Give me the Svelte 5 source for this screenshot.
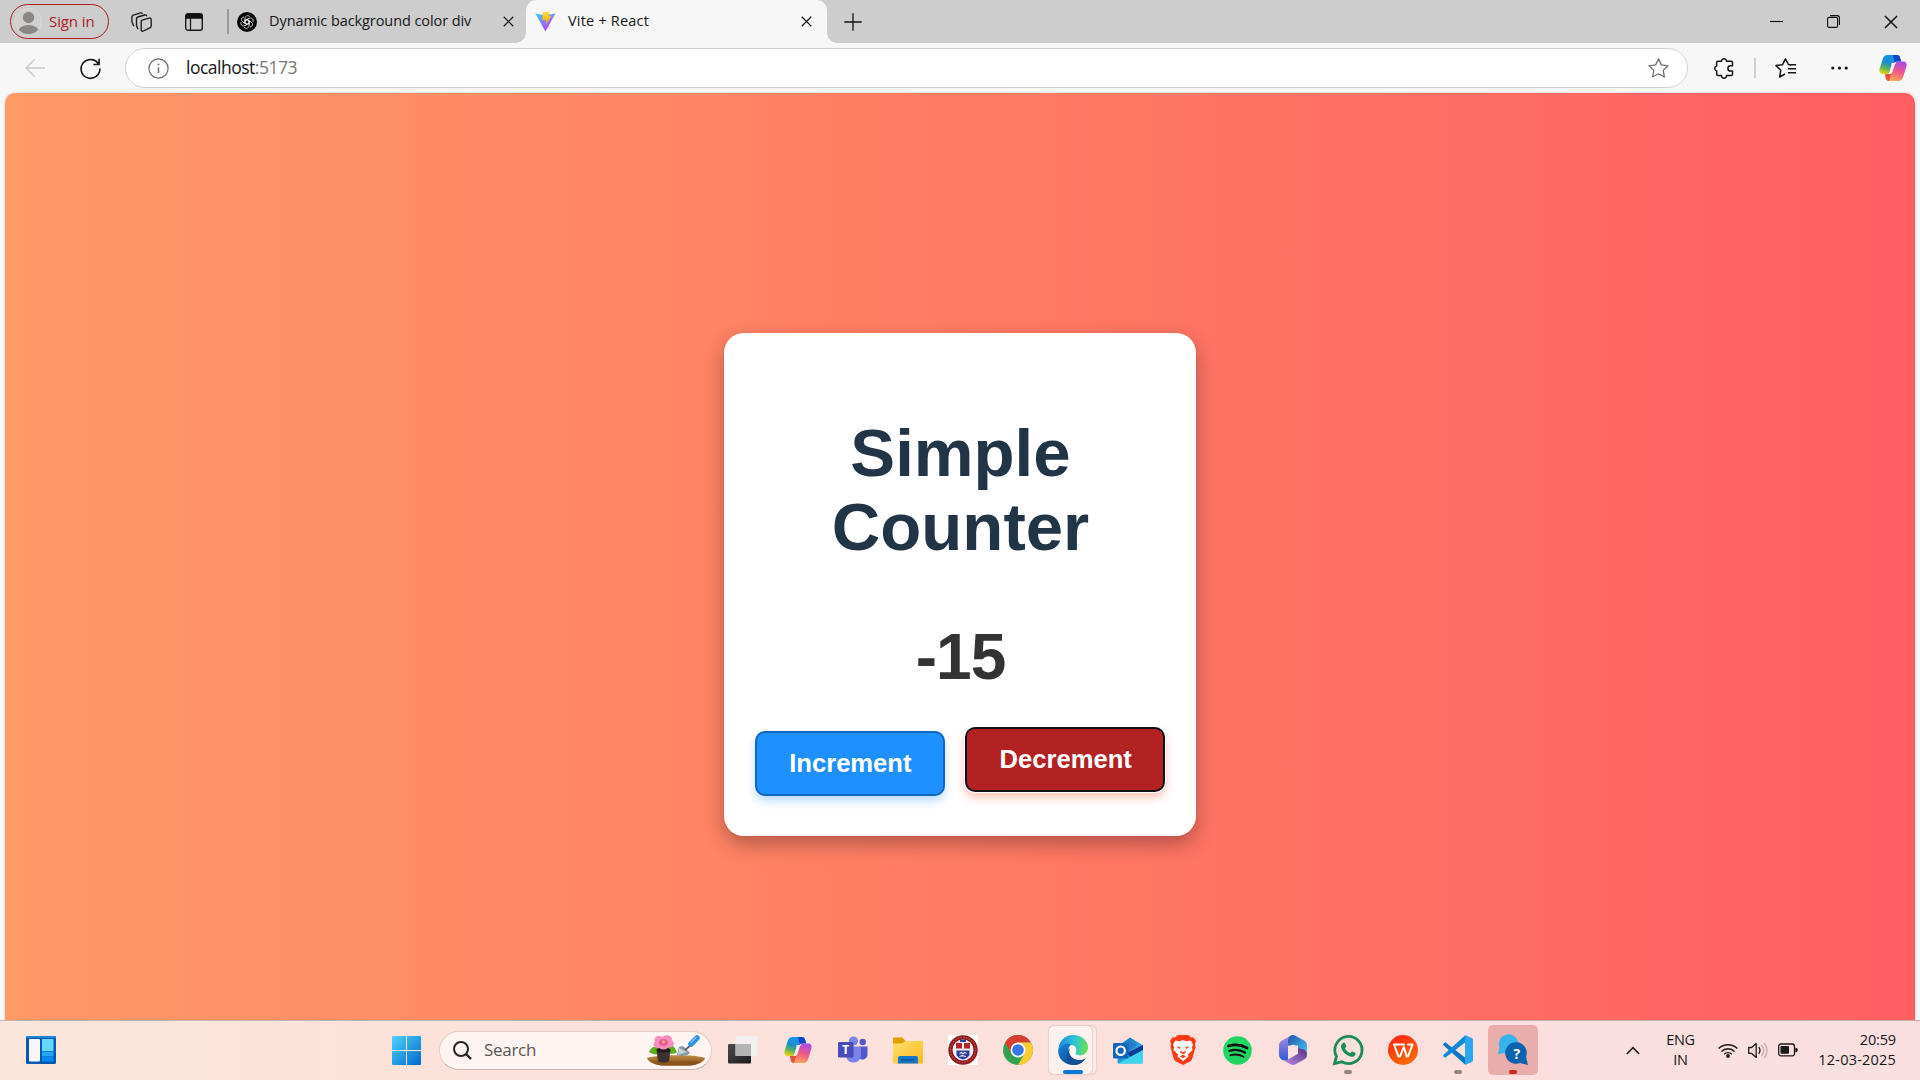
<script>
  let count = $state(-15);
</script>

{#snippet copilot()}
  <svg width="28" height="26" viewBox="0 0 28 26">
    <path d="M9 0h9c2 0 2.600 1.200 3.200 3l1 3.500h-4c-2 0-3 1-3.600 3l-2 6c-.8 2.500-2 3.500-4.500 3.500H3.500C.7 19 0 16.500.6 14L3.700 4C4.500 1.500 6 0 9 0z" fill="url(#cpA)" />
    <path d="M14 0h4c2 0 2.600 1.200 3.200 3l1 3.500h-4c-1.200 0-2 .4-2.600 1z" fill="#1146c8" />
    <path d="M19 26h-9c-2 0-2.600-1.200-3.200-3l-1-4h3.500c2.500 0 3.700-1 4.500-3.500l2-6c.6-2 1.600-3 3.600-3h5.100c2.800 0 3.500 2.500 2.900 5l-3.100 10C23.500 24.500 22 26 19 26z" fill="url(#cpB)" />
    <path d="M6 19h3.300c1.500 0 2.500-.4 3.200-1.200L10 26c-2 0-2.600-1.200-3.200-3z" fill="#e8503a" />
    <path d="M12.500 8h4.500c-.8.500-1.200 1.200-1.500 2l-2.300 7c-.5 1.300-1.200 2-2.500 2h-1l2.500-8z" fill="#fbeeee" />
  </svg>
{/snippet}

{#snippet cross(size)}
  <svg width={size} height={size} viewBox="0 0 12 12" fill="none" stroke="#111" stroke-width="1.300"><path d="M.8.8l10.400 10.400M11.200.8L.8 11.200" /></svg>
{/snippet}

<svg class="defs" width="0" height="0" aria-hidden="true">
  <defs>
    <linearGradient id="cpA" x1="0.600" y1="0" x2="0.200" y2="1"><stop offset="0" stop-color="#1295f0" /><stop offset=".45" stop-color="#1c8fc8" /><stop offset=".7" stop-color="#55b35c" /><stop offset="1" stop-color="#f2d411" /></linearGradient>
    <linearGradient id="cpB" x1="0.800" y1="0" x2="0.400" y2="1"><stop offset="0" stop-color="#a44cf0" /><stop offset=".5" stop-color="#f0568a" /><stop offset="1" stop-color="#fdaa55" /></linearGradient>
    <linearGradient id="viteA" x1="0" y1="0" x2=".6" y2="1"><stop offset="0" stop-color="#41d1ff" /><stop offset="1" stop-color="#bd34fe" /></linearGradient>
    <linearGradient id="viteB" x1="0" y1="0" x2="0" y2="1"><stop offset="0" stop-color="#ffdd35" /><stop offset="1" stop-color="#ffa800" /></linearGradient>
    <linearGradient id="win" x1="0" y1="0" x2="1" y2="1"><stop offset="0" stop-color="#4fd3ff" /><stop offset="1" stop-color="#0069cc" /></linearGradient>
    <linearGradient id="edgeA" x1="0" y1=".3" x2="1" y2=".4"><stop offset="0" stop-color="#1b8fdc" /><stop offset=".55" stop-color="#2fc2d6" /><stop offset="1" stop-color="#67e052" /></linearGradient>
    <linearGradient id="edgeB" x1="0" y1="0" x2=".7" y2="1"><stop offset="0" stop-color="#1688dc" /><stop offset="1" stop-color="#10458c" /></linearGradient>
    <linearGradient id="folder" x1="0" y1="0" x2="1" y2="1"><stop offset="0" stop-color="#ffdf6b" /><stop offset="1" stop-color="#fbb91f" /></linearGradient>
    <linearGradient id="m365" x1="0" y1="0" x2="0" y2="1"><stop offset="0" stop-color="#b18ae0" /><stop offset="1" stop-color="#2b5cd6" /></linearGradient>
    <linearGradient id="m365b" x1="0" y1="0" x2="1" y2="1"><stop offset="0" stop-color="#2350a8" /><stop offset="1" stop-color="#48c8f4" /></linearGradient>
    <linearGradient id="m365c" x1="0" y1="1" x2="1" y2="0"><stop offset="0" stop-color="#bb8be6" /><stop offset="1" stop-color="#54327e" /></linearGradient>
    <linearGradient id="wps" x1="0" y1="0" x2=".6" y2="1"><stop offset="0" stop-color="#ff1f17" /><stop offset="1" stop-color="#ff6a00" /></linearGradient>
    <linearGradient id="dark" x1="0" y1="0" x2="1" y2="1"><stop offset="0" stop-color="#4a4a4a" /><stop offset="1" stop-color="#1c1c1c" /></linearGradient>
    <linearGradient id="soil" x1="0" y1="0" x2="0" y2="1"><stop offset="0" stop-color="#c08a48" /><stop offset="1" stop-color="#7c4a14" /></linearGradient>
    <linearGradient id="out" x1="0" y1="0" x2="1" y2="1"><stop offset="0" stop-color="#1565c0" /><stop offset="1" stop-color="#35cdf2" /></linearGradient>
  </defs>
</svg>

<div class="screen">
  <header class="titlebar">
    <div class="signin">
      <svg width="27" height="27" viewBox="0 0 27 27"><defs><clipPath id="av"><circle cx="13.500" cy="13.500" r="12.800" /></clipPath></defs><circle cx="13.500" cy="13.500" r="13" fill="#d2d0ce" stroke="#dedcda" /><g fill="#8a8886" clip-path="url(#av)"><circle cx="13.500" cy="9.500" r="5.700" /><ellipse cx="13.500" cy="23.500" rx="10.500" ry="6.500" /></g></svg>
      <span>Sign in</span>
    </div>
    <div class="slot workspaces">
      <svg width="21" height="20" viewBox="0 0 21 20" fill="none" stroke="#1b1b1b" stroke-width="1.350" stroke-linejoin="round" stroke-linecap="round"><path d="M11 8.200l7.300-2.100c1-.3 1.900.2 1.900 1.300v6.300c0 1-.5 1.700-1.400 2.100l-6.400 3.200c-1.200.6-2.200 0-2.200-1.200v-8c0-.8.200-1.400.8-1.600z" /><path d="M6.900 16.800l-1-2.200c-.3-.6-.4-1-.4-1.600V6.800c0-.9.500-1.500 1.300-1.800l6.900-2c.9-.2 1.500 0 1.900.8" /><path d="M2.600 13.700l-1.300-2.900c-.3-.6-.4-1-.4-1.700V5c0-1 .5-1.600 1.400-1.900L9.500.9c.8-.2 1.400 0 1.700.6" /></svg>
    </div>
    <div class="slot vtabs">
      <svg width="18" height="18" viewBox="0 0 18 18"><rect x=".7" y=".7" width="16.600" height="16.600" rx="2.300" fill="none" stroke="#1b1b1b" stroke-width="1.400" /><path d="M.5 5.700V3C.5 1.500 1.500.4 3 .4h12c1.500 0 2.500 1.100 2.500 2.600v2.700z" fill="#111" /><path d="M5.500 5v12" stroke="#1b1b1b" stroke-width="1.300" /></svg>
    </div>
    <div class="split"></div>
    <div class="tab idle">
      <svg width="20" height="20" viewBox="0 0 20 20"><circle cx="10" cy="10" r="10" fill="#080808" /><g fill="none" stroke="#eee" stroke-width=".75">{#each [0, 60, 120, 180, 240, 300] as a}<path transform="rotate({a} 10 10)" d="M8 11.200V6.300c0-2.600 3.500-3.500 4.800-1.400M8 8.800l2.100-1.200 3.800 2.200" />{/each}</g></svg>
      <span class="label long">Dynamic background color div</span>
      <i class="close">{@render cross(11)}</i>
    </div>
    <div class="tab active">
      <svg width="21" height="21" viewBox="0 0 21 21"><path d="M.3 2.600l9.600 1.700 10.600-1.700L10.400 20.500z" fill="url(#viteA)" /><path d="M7.800 1.600L14.800.4l-1.300 4.700 3-.3-5.900 9.200.6-5.200-3.700.4z" fill="url(#viteB)" /></svg>
      <span class="label short">Vite + React</span>
      <i class="close">{@render cross(11)}</i>
    </div>
    <div class="slot add"><svg width="18" height="18" viewBox="0 0 18 18" stroke="#111" stroke-width="1.300"><path d="M9 .3v17.400M.3 9h17.400" /></svg></div>
    <div class="controls">
      <div class="slot"><svg width="13" height="13" viewBox="0 0 13 13"><path d="M0 6.500h13" stroke="#111" stroke-width="1.100" /></svg></div>
      <div class="slot"><svg width="13" height="13" viewBox="0 0 13 13" fill="none" stroke="#111" stroke-width="1.100"><rect x=".6" y="2.400" width="10" height="10" rx="1.500" /><path d="M3 .6h7.200c1.400 0 2.200.8 2.200 2.200V10" /></svg></div>
      <div class="slot last">{@render cross(14)}</div>
    </div>
  </header>

  <nav class="toolbar">
    <div class="slot back"><svg width="20" height="18" viewBox="0 0 20 18" fill="none" stroke="#c9c9c9" stroke-width="1.400"><path d="M20 9H1M9.500.5L1 9l8.500 8.500" /></svg></div>
    <div class="slot reload"><svg width="21" height="21" viewBox="0 0 21 21" fill="none" stroke="#161616" stroke-width="1.600"><path d="M18.800 6.500A9.400 9.400 0 1 0 19.900 10.500M19.100.8v5.700h-5.700" /></svg></div>
    <div class="address">
      <svg width="21" height="21" viewBox="0 0 21 21"><circle cx="10.500" cy="10.500" r="9.600" fill="none" stroke="#6d6d6d" stroke-width="1.200" /><path d="M10.500 9.300v5.700" stroke="#6d6d6d" stroke-width="1.500" /><circle cx="10.500" cy="6.600" r="1" fill="#6d6d6d" /></svg>
      <span class="url">localhost<em>:5173</em></span>
      <svg class="star" width="21" height="20" viewBox="0 0 21 20" fill="none" stroke="#707070" stroke-width="1.300" stroke-linejoin="round"><path d="M10.500.9l2.900 6 6.600.9-4.800 4.600 1.200 6.600-5.900-3.200L4.600 19l1.200-6.600L1 7.800l6.600-.9z" /></svg>
    </div>
    <div class="slot puzzle"><svg width="20" height="21" viewBox="0 0 20 21" fill="none" stroke="#161616" stroke-width="1.500" stroke-linejoin="round"><path d="M4 3.200h3.500C7.400 1.700 8.500.8 10 .8s2.600.9 2.500 2.400h4.700c.8 0 1.300.5 1.300 1.300v3.300h-2c-1.600 0-2.600 1.200-2.600 2.600s1 2.600 2.600 2.600h2v3.300c0 .8-.5 1.300-1.300 1.300h-4.700c.1 1.600-1 2.600-2.500 2.600s-2.600-1-2.500-2.600H4c-.8 0-1.300-.5-1.300-1.300V13C1.500 12.500.8 11.600.8 10.400S1.500 8.300 2.700 7.800V4.500c0-.8.500-1.300 1.300-1.300z" /></svg></div>
    <div class="rule"></div>
    <div class="slot favs"><svg width="21" height="20" viewBox="0 0 21 20" fill="none" stroke="#161616" stroke-width="1.500" stroke-linejoin="round"><path d="M16 6.900l-2.600-.4L10.500.9 7.600 6.700 1 7.600l4.800 4.600L4.600 19l5.400-3" /><path d="M15 6.800h6M13 10.800h8M13 14.800h8" /></svg></div>
    <div class="slot dots"><svg width="17" height="4" viewBox="0 0 17 4" fill="#111"><circle cx="1.800" cy="2" r="1.600" /><circle cx="8.500" cy="2" r="1.600" /><circle cx="15.200" cy="2" r="1.600" /></svg></div>
    <div class="slot cop">{@render copilot()}</div>
  </nav>

  <main class="viewport">
    <div class="page">
      <section class="card">
        <h1>Simple Counter</h1>
        <p class="count">{count}</p>
        <div class="buttons">
          <button class="inc" onclick={() => count++}>Increment</button>
          <button class="dec" onclick={() => count--}>Decrement</button>
        </div>
      </section>
    </div>
  </main>

  <footer class="taskbar">
    <div class="widgets"><svg width="30" height="28" viewBox="0 0 30 28"><rect width="30" height="28" rx="1.500" fill="#0759ad" /><path d="M0 1h30" stroke="#1e84d8" stroke-width="2" /><rect x="3" y="3" width="11" height="22.500" rx="1" fill="#f6f6f6" /><rect x="16" y="3" width="11.500" height="12" fill="#62d6ff" /><rect x="16" y="15.500" width="11.500" height="5" fill="#22a4fa" /><rect x="16" y="21" width="11.500" height="4.500" fill="#078af0" /></svg></div>
    <div class="start"><svg width="29" height="29" viewBox="0 0 29 29" fill="url(#win)"><path d="M1 0h13v14H0V1a1 1 0 0 1 1-1zM15 0h13a1 1 0 0 1 1 1v13H15zM0 15h14v14H1a1 1 0 0 1-1-1zM15 15h14v13a1 1 0 0 1-1 1H15z" /></svg></div>
    <div class="search">
      <svg width="19" height="19" viewBox="0 0 19 19" fill="none" stroke="#222" stroke-width="2"><circle cx="8" cy="8" r="7" /><path d="M13 13l5 5" stroke-width="2.400" /></svg>
      <span>Search</span>
      <svg class="art" width="60" height="31" viewBox="0 0 60 31">
        <path d="M1 23c10-3 46-4 58 0-1 4-7 7-16 7.500H18C8 30 2 27 1 23z" fill="url(#soil)" /><path d="M5 25.500c15 2 32 0 50 1-4 2.500-8 4-12 4H18c-6 0-10-2-13-5z" fill="#8a5518" />
        <path d="M3 17c2-5 6-7 13-4l3 5c-7 2-12 2-16-1zM20 17c1-4 4-7 7-6 3 3 3.500 5 3.500 7-4 1-8 1-10.500-1z" fill="#5caf21" />
        <path d="M10.500 15h14l-1.500 11c-3 2-8 2-11 0z" fill="#3a3030" /><ellipse cx="17.500" cy="15" rx="7" ry="2.500" fill="#211b1b" />
        <g fill="#f78dbd"><ellipse cx="13" cy="4.500" rx="4.500" ry="3.500" /><ellipse cx="21" cy="3.800" rx="5" ry="3.600" /><ellipse cx="12" cy="9.500" rx="4.500" ry="3.500" /><ellipse cx="23" cy="8.500" rx="5" ry="4" /><ellipse cx="17.500" cy="11.500" rx="5" ry="3" /></g><ellipse cx="17.500" cy="7.500" rx="4.500" ry="3.500" fill="#ea5d94" /><circle cx="17.500" cy="7" r="1.400" fill="#ffb067" />
        <path d="M31 20l2-8 4-1 7 7c-3 3-8 4-13 2z" fill="#8997a1" /><path d="M33 13l8 4-9 3z" fill="#c5d0d8" /><path d="M39 15l6-5" stroke="#59636b" stroke-width="1.800" /><path d="M45 9l6-6" stroke="#2b95e2" stroke-width="5.500" stroke-linecap="round" /><path d="M45 7.500l5-5" stroke="#7cc5f7" stroke-width="1.500" stroke-linecap="round" />
      </svg>
    </div>

    <div class="apps">
      <div class="app"><svg width="30" height="30" viewBox="0 0 30 30"><rect x="0" y="9" width="23" height="19.500" rx="1" fill="url(#dark)" /><rect x="7.500" y="1" width="22" height="20" rx="1" fill="#f1f1f1" opacity=".85" /><path d="M7.500 9H23v12H7.500z" fill="#b3b3b3" /></svg></div>
      <div class="app">{@render copilot()}</div>
      <div class="app"><svg width="30" height="28" viewBox="0 0 30 28"><circle cx="15.500" cy="5" r="4.600" fill="#7b83eb" /><circle cx="24.700" cy="6" r="3.200" fill="#5059c9" /><path d="M21 10.500h8.500V18a5 5 0 0 1-8.500 4z" fill="#5059c9" /><path d="M8 10.500h15V19c0 10-15 10-15 0z" fill="#7b83eb" /><rect y="6" width="15.500" height="15.500" rx="1.300" fill="#464db8" /><text x="7.700" y="18.200" text-anchor="middle" fill="#fff" class="glyph" font-size="12.500">T</text></svg></div>
      <div class="app"><svg width="30" height="27" viewBox="0 0 30 27"><path d="M0 1.500Q0 .5 1 .5h8.500l3 3.500H29q1 0 1 1V8H0z" fill="#dfa000" /><path d="M0 6.500h9L12.500 4H29q1 0 1 1v20.500q0 1-1 1H1q-1 0-1-1z" fill="url(#folder)" /><path d="M5 26.500V21q0-2 2-2h16q2 0 2 2v5.500z" fill="#1677c8" /><path d="M8.500 23h13" stroke="#0b5390" stroke-width="1.500" /></svg></div>
      <div class="app"><svg width="30" height="30" viewBox="0 0 30 30"><rect width="30" height="30" fill="#fff" /><circle cx="15" cy="15" r="14.700" fill="#8e1719" /><circle cx="15" cy="15" r="12.500" fill="none" stroke="#b75458" stroke-width="1.500" stroke-dasharray="1.300 1.500" /><circle cx="15" cy="15" r="10.500" fill="#f3eef2" /><path d="M8 8h6v5.500H8zM16 8h6v5.500h-6z" fill="#b0252a" /><path d="M12 4.700h6V7h-6z" fill="#2c3c9b" /><path d="M8.500 15.500h13V20q-2 3.500-6.500 4.500Q10.500 23.500 8.500 20z" fill="#2c3c9b" /><path d="M11.500 18.500l2-1 1.500 1.500 1.500-1.500 2 1M11.500 21.500l2.500-.8 4 .8" stroke="#e8e6f5" stroke-width="1.200" fill="none" /></svg></div>
      <div class="app"><svg width="30" height="30" viewBox="0 0 30 30"><circle cx="15" cy="15" r="15" fill="#33a151" /><path d="M2 7.500a15 15 0 0 1 26 0H15L8.500 18.700z" fill="#db3c30" /><path d="M28 7.500A15 15 0 0 1 15 30l6.500-11.200L15 7.500z" fill="#fccc31" /><circle cx="15" cy="15" r="7.500" fill="#fff" /><circle cx="15" cy="15" r="5.800" fill="#3478e8" /></svg></div>
      <div class="app edge"><div class="behind"></div><div class="front"></div><svg width="30" height="30" viewBox="0 0 30 30"><path d="M.5 14C1 6 7 0 15.200 0 24 0 30 6 30 12.500c0 5-4 8-8.500 8-3 0-4.800-1.200-4.300-2.500 2-2 1.800-6.500-3-8C8.500 8.500 3 10 .5 14z" fill="url(#edgeA)" /><path d="M.2 14.500C3 9 9 7 13.500 9.500 9 12 9.500 19 14 22.500c4 3.500 9 3.300 12.500 1.500C22 30.500 16 30 14 30 6 29.500-.6 23 .2 14.500z" fill="url(#edgeB)" /><path d="M12.200 13c-2.800 5 .3 10.500 6.800 12 3.500.8 6.500-.5 8.500-1.500-3 5.500-8 6.500-12.500 6.500-6-2-9-12-2.800-17z" fill="#124f98" /><path d="M12 14.500c1-3 4.500-3.500 5.800-.8.900 2-.6 3.300-.6 4.300.3 1.500 2.300 2.500 5 2.300-4 2.500-10 .8-10.200-5.800z" fill="#fff" /></svg><b class="run wide"></b></div>
      <div class="app"><svg width="30" height="27" viewBox="0 0 30 27"><path d="M5 9L17 .5 29.500 8v17q0 1.500-1.500 1.500H6q-1.500 0-1.500-1.500z" fill="url(#out)" /><path d="M8 9l9-5 7 4-9 7z" fill="#2878cc" /><path d="M14 16L30 8v5L18 21z" fill="#0a3d99" /><path d="M5 26.500L30 13v12q0 1.500-1.500 1.500z" fill="#3ed3ef" /><rect y="6" width="15.500" height="15.500" rx="1.300" fill="#1066b8" /><circle cx="7.700" cy="13.700" r="4.200" fill="none" stroke="#fff" stroke-width="2.200" /></svg></div>
      <div class="app"><svg width="26" height="30" viewBox="0 0 26 30"><path d="M8 0h10l3 2.500 2.500-.3L26 6l-1 3 .5 3-3 11c-.4 1.500-1 2.300-2.200 3.200L13 30l-7.300-3.800C4.500 25.300 3.900 24.500 3.500 23L.5 12 1 9 0 6l2.500-3.800 2.500.3z" fill="#fb3b14" /><path d="M5.500 5.500l4 .7L13 5l3.500 1.200 4-.7 2.500 4-1 2.500.5 3-4.500 4.500.5 2L13 26l-5.500-4.500.5-2L3.500 15l.5-3-1-2.500z" fill="#fff" /><path d="M6.500 11.300l4 .8-.7 3.900 3.200 1 3.200-1-.7-3.900 4-.8-2.500 2.500-1-.3v4L13 19.300l-3-1.800v-4l-1 .3zM9.800 21.200l3.200-1.500 3.200 1.500-3.200 2z" fill="#fb4317" /></svg></div>
      <div class="app"><svg width="29" height="29" viewBox="0 0 29 29"><circle cx="14.500" cy="14.500" r="14.300" fill="#1ed760" /><g fill="none" stroke="#111" stroke-linecap="round"><path d="M5.500 10c6-1.700 13-1.200 18.500 2" stroke-width="2.800" /><path d="M6.500 14.800c5-1.500 11-1 15.500 1.800" stroke-width="2.300" /><path d="M7.500 19.200c4.500-1.200 9-.7 13 1.600" stroke-width="1.900" /></g></svg></div>
      <div class="app"><svg width="28" height="30" viewBox="0 0 28 30"><path d="M12 .5L3 5.500C1 6.800 0 8.300 0 10.500v9c0 3 1.500 4.500 3.500 5.500s4 .3 5.500-.6V10.500L17 6z" fill="url(#m365)" /><path d="M12 .5c1.500-.8 3-.6 4.500.2L25 5.500c2 1.200 3 3 3 5v9l-9-5v-4L9 10.500V6c0-2.500 1-4.500 3-5.500z" fill="url(#m365b)" /><path d="M28 19.500c0 2.500-1 4-3 5l-8.500 4.800c-1.700 1-3.500 1-5 0L3.500 25c2 1 4 .3 5.500-.6l10-5.700V13l6 1.500c2 1 3 3 3 5z" fill="url(#m365c)" /><path d="M14 9.500l5 2.800v5.500l-5 2.800-5-2.800v-5.500z" fill="#fde1de" /></svg></div>
      <div class="app"><svg width="30" height="30" viewBox="0 0 30 30"><path d="M1.500 28.500l2-7A13.600 13.600 0 1 1 8.700 26.800z" fill="none" stroke="#1c8c56" stroke-width="2.800" /><path d="M10 8c.8-.7 1.700-.6 2.100.3l1.100 2.600c.3 1-.9 1.800-1.200 2.500 1.200 2.200 2.800 3.700 5 4.700.9-.4 1.600-1.900 2.500-1.500l2.500 1.200c1 .5.7 1.500.2 2.200-1 1.600-3.200 2.300-5.200 1.600C12.700 20 9.500 17 8.200 12.800 7.600 10.700 8.600 9 10 8z" fill="#1c8c56" /></svg><b class="run"></b></div>
      <div class="app"><svg width="30" height="30" viewBox="0 0 30 30"><circle cx="15" cy="15" r="15" fill="url(#wps)" /><path d="M16 9.500H6L10.500 21.500H12L15.800 12l3 9.500h1.200L24.500 9.500H20" fill="none" stroke="#fff" stroke-width="2" stroke-linejoin="round" stroke-linecap="round" /></svg></div>
      <div class="app"><svg width="30" height="30" viewBox="0 0 30 30"><path d="M2.200 7.300L22 22.500v7L.8 10.500c-.8-.8-.8-1.500 0-2.300z" fill="#0b76c4" /><path d="M2.200 22.700L22 7.500v-7L.8 19.500c-.8.8-.8 1.500 0 2.300z" fill="#0b88d8" /><path d="M22 0l6.800 3c.8.400 1.200 1 1.200 2v20c0 1-.4 1.600-1.200 2L22 30z" fill="#28a7f2" /></svg><b class="run"></b></div>
      <div class="app help"><svg width="30" height="30" viewBox="0 0 30 30"><path d="M0 19.500L1.500 13a9.800 9.800 0 1 1 9 6L5 18z" fill="#35b5ea" /><path d="M28 22l2 8-8-2a10.800 10.800 0 1 1 6-6z" fill="#0b62ae" /><text x="18.800" y="23.500" text-anchor="middle" fill="#fff" class="glyph" font-size="14">?</text></svg><b class="run red"></b></div>
    </div>

    <div class="tray">
      <div class="slot up"><svg width="14" height="9" viewBox="0 0 14 9" fill="none" stroke="#1a1a1a" stroke-width="1.700"><path d="M.8 8L7 1.700 13.200 8" /></svg></div>
      <div class="lang"><span>ENG</span><span>IN</span></div>
      <div class="status">
        <svg width="20" height="15" viewBox="0 0 20 15" fill="none" stroke="#1a1a1a" stroke-width="1.400"><path d="M.6 5.600a13.300 13.300 0 0 1 18.800 0M3.400 8.500a9.300 9.300 0 0 1 13.200 0M6.200 11.200a5.400 5.400 0 0 1 7.600 0" /><circle cx="10" cy="13" r="1.900" fill="#1a1a1a" stroke="none" /></svg>
        <svg width="20" height="17" viewBox="0 0 20 17" fill="none" stroke="#1a1a1a" stroke-width="1.300" stroke-linejoin="round"><path d="M.7 5.500h3L8.200 1.600v13.800l-4.500-4h-3z" /><path d="M10.800 5.200q2.400 3.300 0 6.600" /><path d="M13.500 2.800q4.400 5.700 0 11.400M16.200.8q5.500 7.700 0 15.400" stroke="#c5aaab" /></svg>
        <svg width="20" height="14" viewBox="0 0 20 14"><rect x=".7" y="1" width="15.800" height="11.800" rx="2.300" fill="none" stroke="#1a1a1a" stroke-width="1.300" /><rect x="2.500" y="3" width="8.500" height="7.800" rx=".8" fill="#1a1a1a" /><path d="M17.300 4.700c1.500 0 2.500.7 2.500 2.300s-1 2.300-2.500 2.300z" fill="#1a1a1a" /></svg>
      </div>
      <div class="clock"><span class="time">20:59</span><span class="date">12-03-2025</span></div>
    </div>
  </footer>
</div>

<style>
  :global(body) { margin: 0; overflow: hidden; background: #f7f7f7; }
  * { box-sizing: border-box; }
  svg { display: block; flex: none; overflow: visible; }
  .defs { position: absolute; }
  .screen { width: 1920px; height: 1080px; display: flex; flex-direction: column; font-family: "Open Sans", "Noto Sans", sans-serif; color: #161616; }
  .slot { display: flex; align-items: center; justify-content: center; flex: none; }

  .titlebar { height: 43px; flex: none; background: #cdcdcd; display: flex; align-items: center; padding-left: 10px; }
  .signin { width: 99px; height: 35px; margin-bottom: 1px; border: 1.500px solid #b3191f; border-radius: 18px; display: flex; align-items: center; gap: 7px; padding-left: 4px; color: #ad1a1f; font-size: 15px; white-space: nowrap; letter-spacing: -0.100px; }
  .signin span { padding-bottom: 1px; }
  .workspaces { width: 53px; margin-left: 6px; }
  .vtabs { width: 52px; }
  .split { width: 2px; height: 25px; margin-left: 7px; background: #9a9a9a; }
  .tab { display: flex; align-items: center; height: 43px; font-size: 14.500px; white-space: nowrap; }
  .idle { width: 297px; padding-left: 8px; }
  .idle .label { margin-left: 12px; width: 204px; }
  .long { letter-spacing: -0.080px; }
  .short { letter-spacing: 0.200px; }
  .label { padding-bottom: 2px; }
  .close { margin-left: auto; }
  .idle .close { margin-right: 12.500px; }
  .active { position: relative; width: 301px; padding-left: 9px; background: #f7f7f7; border-radius: 10px 10px 0 0; }
  .active .label { margin-left: 12px; }
  .active .close { margin-right: 15px; }
  .active::before, .active::after { content: ""; position: absolute; bottom: 0; width: 10px; height: 10px; }
  .active::before { left: -10px; background: radial-gradient(circle at 0 0, #cdcdcd 9.500px, #f7f7f7 10px); }
  .active::after { right: -10px; background: radial-gradient(circle at 100% 0, #cdcdcd 9.500px, #f7f7f7 10px); }
  .add { width: 52px; }
  .controls { margin-left: auto; display: flex; }
  .controls .slot { width: 57px; }
  .controls .last { width: 58px; }

  .toolbar { height: 50px; flex: none; background: #f7f7f7; display: flex; align-items: center; }
  .back { width: 70px; }
  .reload { width: 40px; }
  .address { margin-left: 15px; width: 1563px; height: 40px; border: 1.500px solid #d1d1d1; border-radius: 20px; background: #fff; display: flex; align-items: center; padding: 0 18.500px 0 21.500px; }
  .url { margin-left: 17.500px; padding-bottom: 3px; font-size: 17.500px; letter-spacing: -0.500px; }
  .url em { font-style: normal; color: #777; }
  .star { margin-left: auto; }
  .puzzle { width: 60px; margin-left: 6px; }
  .rule { width: 2px; height: 20px; background: #d0d0d0; }
  .favs { width: 58px; }
  .dots { width: 51px; }
  .cop { width: 55px; }

  .viewport { height: 927px; flex: none; padding: 0 5px; background: #f7f7f7; }
  .page { height: 927px; border-radius: 10px 10px 0 0; background: linear-gradient(to right, #ff9966, #ff5e62); padding-top: 240px; display: flex; justify-content: center; align-items: flex-start; box-shadow: 0 0 2px #bbb; }
  .card { width: 472.600px; height: 503px; padding: 83px 31px 40px; border-radius: 20px; background: #fff; box-shadow: 0 8px 20px rgba(0, 0, 0, 0.300); font-family: "Liberation Sans", Arial, sans-serif; text-align: center; display: flex; flex-direction: column; }
  h1 { margin: 0 39px 0 40px; font-size: 67.200px; line-height: 74px; font-weight: 700; color: #213547; }
  .count { margin: 56px 0 0 1px; font-size: 64px; line-height: 74px; font-weight: 700; color: #333; letter-spacing: -1px; }
  .buttons { margin-top: auto; display: flex; gap: 20px; justify-content: center; }
  button { height: 65px; padding: 0 31.500px 0 32.500px; border: 2px solid; border-radius: 10px; font: 700 25.600px "Liberation Sans", Arial, sans-serif; color: #fff; white-space: nowrap; }
  .inc { background: #1e90ff; border-color: #1565c0; box-shadow: 0 5px 10px rgba(30, 144, 255, 0.300); }
  .dec { background: #b22222; border-color: #101018; box-shadow: 0 0 0 1px #fff, 0 5px 10px rgba(255, 99, 71, 0.450); transform: translateY(-4px); }

  .taskbar { height: 60px; flex: none; border-top: 1px solid #c4b3af; padding-bottom: 1px; background: linear-gradient(to right, #fae6da, #fde2da 20%, #fbe0dc 50%, #fadfe0); display: flex; align-items: center; }
  .widgets { margin-left: 26px; width: 30px; }
  .start { margin-left: 336px; width: 29px; }
  .search { margin-left: 18px; width: 273px; height: 39px; border: 1px solid #e5cdc8; border-bottom-color: #c8b5b1; border-radius: 20px; background: #fef5f2; display: flex; align-items: center; padding: 0 5px 0 13px; font-size: 17px; color: #5a5654; letter-spacing: -0.300px; }
  .search span { margin-left: 12px; padding-bottom: 1px; }
  .art { margin-left: auto; }
  .apps { display: flex; margin-left: 3px; }
  .app { position: relative; width: 55px; height: 50px; display: flex; align-items: center; justify-content: center; }
  .app svg { position: relative; }
  .glyph { font-family: "Open Sans", sans-serif; font-weight: 700; }
  .run { position: absolute; bottom: 1px; left: 23.500px; width: 8px; height: 4px; border-radius: 2px; background: #948582; }
  .wide { left: 17.500px; width: 20px; background: #0878d4; }
  .red { background: #c42b1c; }
  .front, .behind { position: absolute; top: 1px; height: 48px; border-radius: 5px; background: #fdf1ee; box-shadow: 0 0 1px 0.500px #e8cfca; }
  .front { left: 4px; width: 43px; }
  .behind { left: 10px; width: 41px; background: #fceae6; }
  .help::before { content: ""; position: absolute; left: 2.500px; width: 50px; height: 50px; border-radius: 5px; background: #e9aeab; }
  .tray { margin-left: auto; display: flex; align-items: center; padding-right: 24px; font-size: 14.500px; line-height: 20px; letter-spacing: -0.300px; }
  .tray .up { width: 14px; }
  .lang { width: 40px; margin-left: 21px; padding-right: 1px; display: flex; flex-direction: column; align-items: center; }
  .status { display: flex; align-items: center; gap: 10px; margin-left: 17px; }
  .clock { margin-left: 10px; width: 88px; display: flex; flex-direction: column; align-items: flex-end; white-space: nowrap; }
  .time { letter-spacing: -0.150px; }
  .date { letter-spacing: 0.200px; }
</style>
